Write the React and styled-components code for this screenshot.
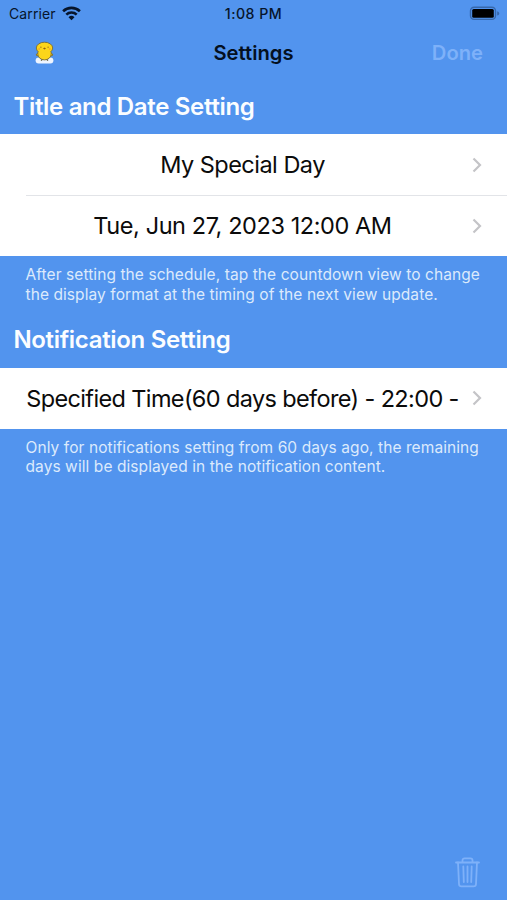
import React from 'react';
import styled, { createGlobalStyle } from 'styled-components';

const GlobalStyle = createGlobalStyle`
  body {
    margin: 0;
    background: #5294ee;
    font-family: Inter, "Liberation Sans", sans-serif;
  }
`;

const Screen = styled.main`
  display: flex;
  flex-direction: column;
  width: 100%;
  height: 900px;
  background: #5294ee;
  overflow: hidden;
`;

const StatusBar = styled.div`
  display: grid;
  grid-template-columns: 1fr auto 1fr;
  align-items: center;
  height: 27px;
  padding: 0 7px;
  font-size: 14px;
  line-height: 27px;
  color: #07152b;
`;

const Carrier = styled.div`
  display: flex;
  align-items: center;
  gap: 6px;
  padding-left: 2px;
  letter-spacing: 0.1px;
`;

const Clock = styled.div`
  font-weight: 550;
  font-size: 14.2px;
  letter-spacing: 0.45px;
`;

const Battery = styled.svg`
  justify-self: end;
`;

const NavBar = styled.header`
  display: grid;
  grid-template-columns: 1fr auto 1fr;
  align-items: center;
  height: 51px;
  padding: 0 24px;
`;

const HomeButton = styled.button`
  display: flex;
  justify-self: start;
  padding: 0 0 0 9px;
  border: 0;
  background: none;
`;

const NavTitle = styled.h1`
  margin: 0;
  font-size: 20.2px;
  font-weight: 600;
  line-height: 26px;
  color: #04101f;
`;

const DoneButton = styled.button`
  justify-self: end;
  padding: 0;
  border: 0;
  background: none;
  font: 600 20.2px/26px Inter, "Liberation Sans", sans-serif;
  color: #7eb1f9;
`;

const SectionTitle = styled.h2`
  margin: 0;
  padding: 0 13.4px;
  height: 56.4px;
  font-size: 24px;
  font-weight: 600;
  line-height: 57px;
  letter-spacing: -0.32px;
  color: #fbfdff;
`;

const Group = styled.div`
  background: #fff;
`;

const Row = styled.div`
  display: flex;
  align-items: center;
  height: 61px;
  padding-right: 24px;
  background: linear-gradient(#e2e4e8, #e2e4e8) 26px 0 / 100% ${(p) => (p.$divided ? '1px' : '0')} no-repeat;
`;

const RowLabel = styled.div`
  flex: 1;
  padding: 0 12px 0 26px;
  display: flex;
  justify-content: center;
  white-space: nowrap;
  min-width: 0;
  font-size: 23.5px;
  line-height: 61px;
  letter-spacing: ${(p) => p.$tracking}px;
  color: #0b0b0b;
`;

const Note = styled.p`
  margin: 0;
  padding: 9.1px 0 0 25.5px;
  box-sizing: border-box;
  height: 55px;
  font-size: 15.5px;
  line-height: 19.5px;
  letter-spacing: 0.08px;
  white-space: nowrap;
  color: #dceafc;
`;

const Footer = styled.footer`
  display: flex;
  justify-content: flex-end;
  margin-top: auto;
  padding: 0 27px 12px;
`;

const WifiIcon = () => (
  <svg width="19" height="15" viewBox="0 0 19 15">
    <g fill="none" stroke="#07152b" strokeWidth="2.6">
      <path d="M1.1 5.3a12.1 12.1 0 0 1 16.8 0" />
      <path d="M4.3 8.6a7.5 7.5 0 0 1 10.4 0" />
    </g>
    <path d="M9.5 14.2l-3-3a4.3 4.3 0 0 1 6 0z" fill="#07152b" />
  </svg>
);

const BatteryIcon = () => (
  <Battery width="31" height="15" viewBox="0 0 31 15">
    <rect x="1.5" y="1.2" width="25" height="12.2" rx="3.6" fill="none" stroke="#3768ac" strokeWidth="1.4" />
    <rect x="3.2" y="2.9" width="21.6" height="8.8" rx="1.5" fill="#000" />
    <path d="M28.2 5.2q2 .5 2 2.2t-2 2.2z" fill="#3768ac" />
  </Battery>
);

const ChickIcon = () => (
  <svg width="23" height="24" viewBox="0 0 23 24">
    <rect x="2.6" y="16.6" width="17.8" height="6" rx="3" fill="#eef5ff" />
    <g fill="#fbd51b" stroke="#7a6c35" strokeWidth=".9">
      <path d="M5.500 11 3 14l3 1.500M17.500 11l2.500 3-3 1.500" />
      <ellipse cx="11.5" cy="13" rx="6.7" ry="5.9" />
      <ellipse cx="11.5" cy="7" rx="8.200" ry="5.800" />
    </g>
    <ellipse cx="11.5" cy="11.500" rx="6" ry="5" fill="#fbd51b" />
    <path d="M8.500 18.500v1.200M14.500 18.500v1.200" stroke="#5d5430" strokeWidth="1.300" />
    <path d="M10 7.400l1.500-1 1.500 1-1.500 1z" fill="#8f6117" />
    <circle cx="7.900" cy="6.200" r=".6" fill="#8f6117" />
    <circle cx="15.100" cy="6.200" r=".6" fill="#8f6117" />
    <circle cx="6.200" cy="8" r="1" fill="#f7ae29" />
    <circle cx="16.800" cy="8" r="1" fill="#f7ae29" />
  </svg>
);

const Chevron = () => (
  <svg width="12" height="16" viewBox="0 0 12 16">
    <path d="M2.500 1.500L9 8l-6.500 6.500" fill="none" stroke="#c4c4c7" strokeWidth="2.200" />
  </svg>
);

const TrashIcon = () => (
  <svg width="25" height="31" viewBox="0 0 25 31" fill="none" stroke="#7eb1f9" strokeWidth="1.800" strokeLinecap="round" strokeLinejoin="round">
    <path d="M1 5.500h23M7.500 5.500V3.300a2 2 0 0 1 2-2h6a2 2 0 0 1 2 2v2.200" />
    <path d="M3 5.500L4 27a2.500 2.500 0 0 0 2.500 2.400h12A2.500 2.500 0 0 0 21 27l1-21.500" />
    <path d="M8.300 9.500l.5 15.500M12.500 9.500V25M16.700 9.500L16.200 25" />
  </svg>
);

const SettingRow = ({ label, tracking, divided }) => (
  <Row $divided={divided}>
    <RowLabel $tracking={tracking}>{label}</RowLabel>
    <Chevron />
  </Row>
);

export default function App() {
  return (
    <>
      <GlobalStyle />
      <Screen>
        <StatusBar>
          <Carrier>
            Carrier
            <WifiIcon />
          </Carrier>
          <Clock>1:08 PM</Clock>
          <BatteryIcon />
        </StatusBar>
        <NavBar>
          <HomeButton type="button" aria-label="Home">
            <ChickIcon />
          </HomeButton>
          <NavTitle>Settings</NavTitle>
          <DoneButton type="button" disabled>Done</DoneButton>
        </NavBar>
        <SectionTitle>Title and Date Setting</SectionTitle>
        <Group>
          <SettingRow label="My Special Day" tracking={-0.52} />
          <SettingRow label="Tue, Jun 27, 2023 12:00 AM" tracking={-0.42} divided />
        </Group>
        <Note>
          After setting the schedule, tap the countdown view to change
          <br />
          the display format at the timing of the next view update.
        </Note>
        <SectionTitle>Notification Setting</SectionTitle>
        <Group>
          <SettingRow label="Specified Time(60 days before) - 22:00 -" tracking={-0.63} />
        </Group>
        <Note>
          Only for notifications setting from 60 days ago, the remaining
          <br />
          days will be displayed in the notification content.
        </Note>
        <Footer>
          <TrashIcon />
        </Footer>
      </Screen>
    </>
  );
}
